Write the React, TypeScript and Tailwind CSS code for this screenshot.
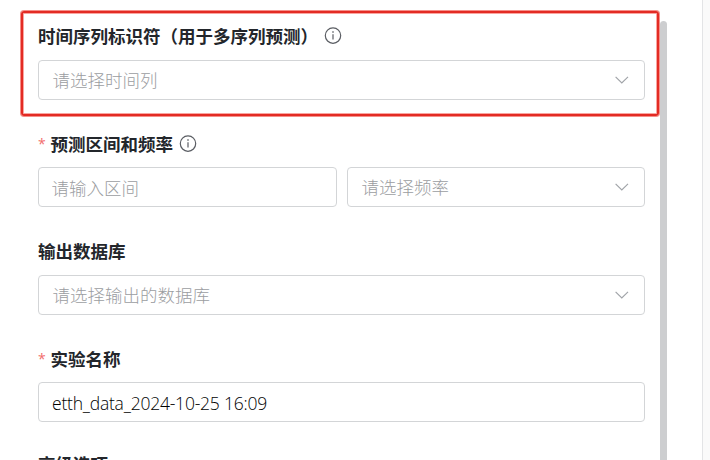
import type { ReactNode } from "react";

function InfoIcon({ className = "" }: { className?: string }) {
  return (
    <svg className={`h-[18px] w-[18px] shrink-0 ${className}`} viewBox="0 0 18 18" fill="none" stroke="#5a5d63">
      <circle cx="9" cy="8.6" r="7.7" strokeWidth="1.2" />
      <path d="M9 7.2V12.6" strokeWidth="1.2" />
      <path d="M9 4.3V5.7" strokeWidth="1.4" />
    </svg>
  );
}

function ChevronIcon() {
  return (
    <svg className="h-2 w-[14px] shrink-0" viewBox="0 0 14 8" fill="none" stroke="#a0a3a8" strokeWidth="1.15">
      <path d="M0.6 0.8L6.8 7L13 0.8" />
    </svg>
  );
}

function Label({ children, required, icon }: { children: ReactNode; required?: boolean; icon?: ReactNode }) {
  return (
    <div className="flex h-[26px] items-center whitespace-nowrap text-[17.5px] leading-[26px] font-bold text-[#23262b]">
      {required && (
        <span className="w-[12.5px] shrink-0 font-['Open_Sans',sans-serif] text-[14px] font-medium text-[#f26d6d]">*</span>
      )}
      <span>{children}</span>
      {icon}
    </div>
  );
}

function Select({ placeholder }: { placeholder: string }) {
  return (
    <div className="flex h-10 flex-1 items-center justify-between rounded border border-[#d3d5d7] pr-[15px] pl-[13.5px] text-[17.5px] font-light text-[#9b9da1]">
      <span>{placeholder}</span>
      <ChevronIcon />
    </div>
  );
}

export default function App() {
  return (
    <div className="relative flex h-[460px] w-[710px] overflow-hidden bg-white font-['Noto_Sans_CJK_SC',sans-serif]">
      <form className="flex w-[660px] shrink-0 flex-col pt-[23px] pr-[15px] pl-[38px]">
        <section className="mb-[31px] flex flex-col gap-[11px]">
          <Label icon={<InfoIcon className="ml-[6px]" />}>时间序列标识符（用于多序列预测）</Label>
          <div className="flex"><Select placeholder="请选择时间列" /></div>
        </section>
        <section className="mb-[31px] flex flex-col gap-[10px]">
          <Label required icon={<InfoIcon className="ml-[6px]" />}>预测区间和频率</Label>
          <div className="flex gap-[10px]">
            <div className="flex h-10 w-[299px] items-center rounded border border-[#d3d5d7] pt-[2px] pl-[12.5px] text-[17.5px] font-light text-[#9b9da1]">
              请输入区间
            </div>
            <Select placeholder="请选择频率" />
          </div>
        </section>
        <section className="mb-[31px] flex flex-col gap-[11px]">
          <Label>输出数据库</Label>
          <div className="flex"><Select placeholder="请选择输出的数据库" /></div>
        </section>
        <section className="mb-[29px] flex flex-col gap-[10px]">
          <Label required>实验名称</Label>
          <div className="flex h-10 items-center rounded border border-[#d3d5d7] pt-[3px] pl-[13px] font-['Open_Sans',sans-serif] text-[17.5px] font-light text-black">
            <span className="tracking-[-0.22px]">etth_data_2024-10-25 16:09</span>
          </div>
        </section>
        <Label>高级选项</Label>
      </form>
      <div className="mt-[21px] w-[7px] shrink-0 rounded-t-full bg-[#cdced0]" />
      <div className="w-[35px] shrink-0" />
      <aside className="flex-1 border-l border-[#e3e4e6] bg-[#fafafa]" />
      <div className="absolute top-[11px] left-[21px] h-[105px] w-[638px] rounded-[3px] border-2 border-[#e32b24] shadow-[0_0_0_1px_#f58f89,inset_0_0_0_1px_#f9a5a0]" />
    </div>
  );
}
